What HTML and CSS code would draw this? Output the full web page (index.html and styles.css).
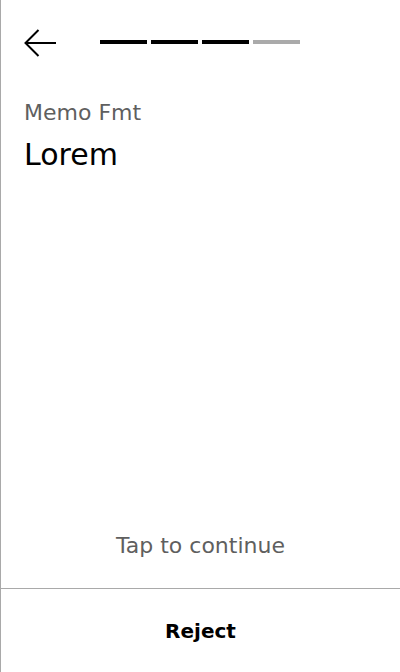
FILE: index.html
```html
<!DOCTYPE html>
<html>
<head>
<meta charset="utf-8">
<link rel="stylesheet" href="styles.css">
</head>
<body>
<div class="screen">
  <header class="top">
    <button class="back" aria-label="Back">
      <svg width="32" height="28" viewBox="0 0 32 28" fill="none" stroke="#000" stroke-width="2">
        <path d="M32 14H1.5"/>
        <path d="M14.5 1L1.5 14L14.5 27"/>
      </svg>
    </button>
    <div class="progress">
      <span class="seg done"></span>
      <span class="seg done"></span>
      <span class="seg done"></span>
      <span class="seg"></span>
    </div>
  </header>
  <main class="content">
    <div class="label">Memo Fmt</div>
    <div class="value">Lorem</div>
  </main>
  <div class="hint">Tap to continue</div>
  <footer class="footer">
    <button class="reject">Reject</button>
  </footer>
</div>
</body>
</html>
```
FILE: styles.css
```css
html, body {
  margin: 0;
  padding: 0;
  background: #fff;
}
body {
  font-family: "DejaVu Sans", sans-serif;
  color: #000;
}
.screen {
  width: 400px;
  height: 672px;
  box-sizing: border-box;
  border-left: 1px solid #a9a9a9;
  display: flex;
  flex-direction: column;
}
.top {
  display: flex;
  align-items: flex-start;
  height: 28px;
  margin-top: 29px;
  padding-left: 23px;
}
.back {
  border: 0;
  background: none;
  padding: 0;
  width: 32px;
  height: 28px;
  display: block;
}
.back svg { display: block; }
.progress {
  display: flex;
  gap: 4px;
  margin-left: 44px;
  margin-top: 11px;
}
.seg {
  width: 47px;
  height: 4px;
  background: #aaaaaa;
}
.seg.done { background: #000; }
.content {
  flex: 1;
  padding: 43px 0 0 23px;
}
.label {
  font-size: 22px;
  line-height: 26px;
  color: #5f5f5f;
}
.value {
  font-size: 30px;
  line-height: 36px;
  margin-top: 11px;
}
.hint {
  text-align: center;
  font-size: 22px;
  line-height: 26px;
  color: #5f5f5f;
  padding-bottom: 29px;
}
.footer {
  border-top: 1px solid #a9a9a9;
  height: 83px;
  display: flex;
  align-items: center;
  justify-content: center;
}
.reject {
  border: 0;
  background: none;
  font-family: "DejaVu Sans", sans-serif;
  font-size: 20px;
  font-weight: 600;
  color: #000;
  padding: 0;
}
```
